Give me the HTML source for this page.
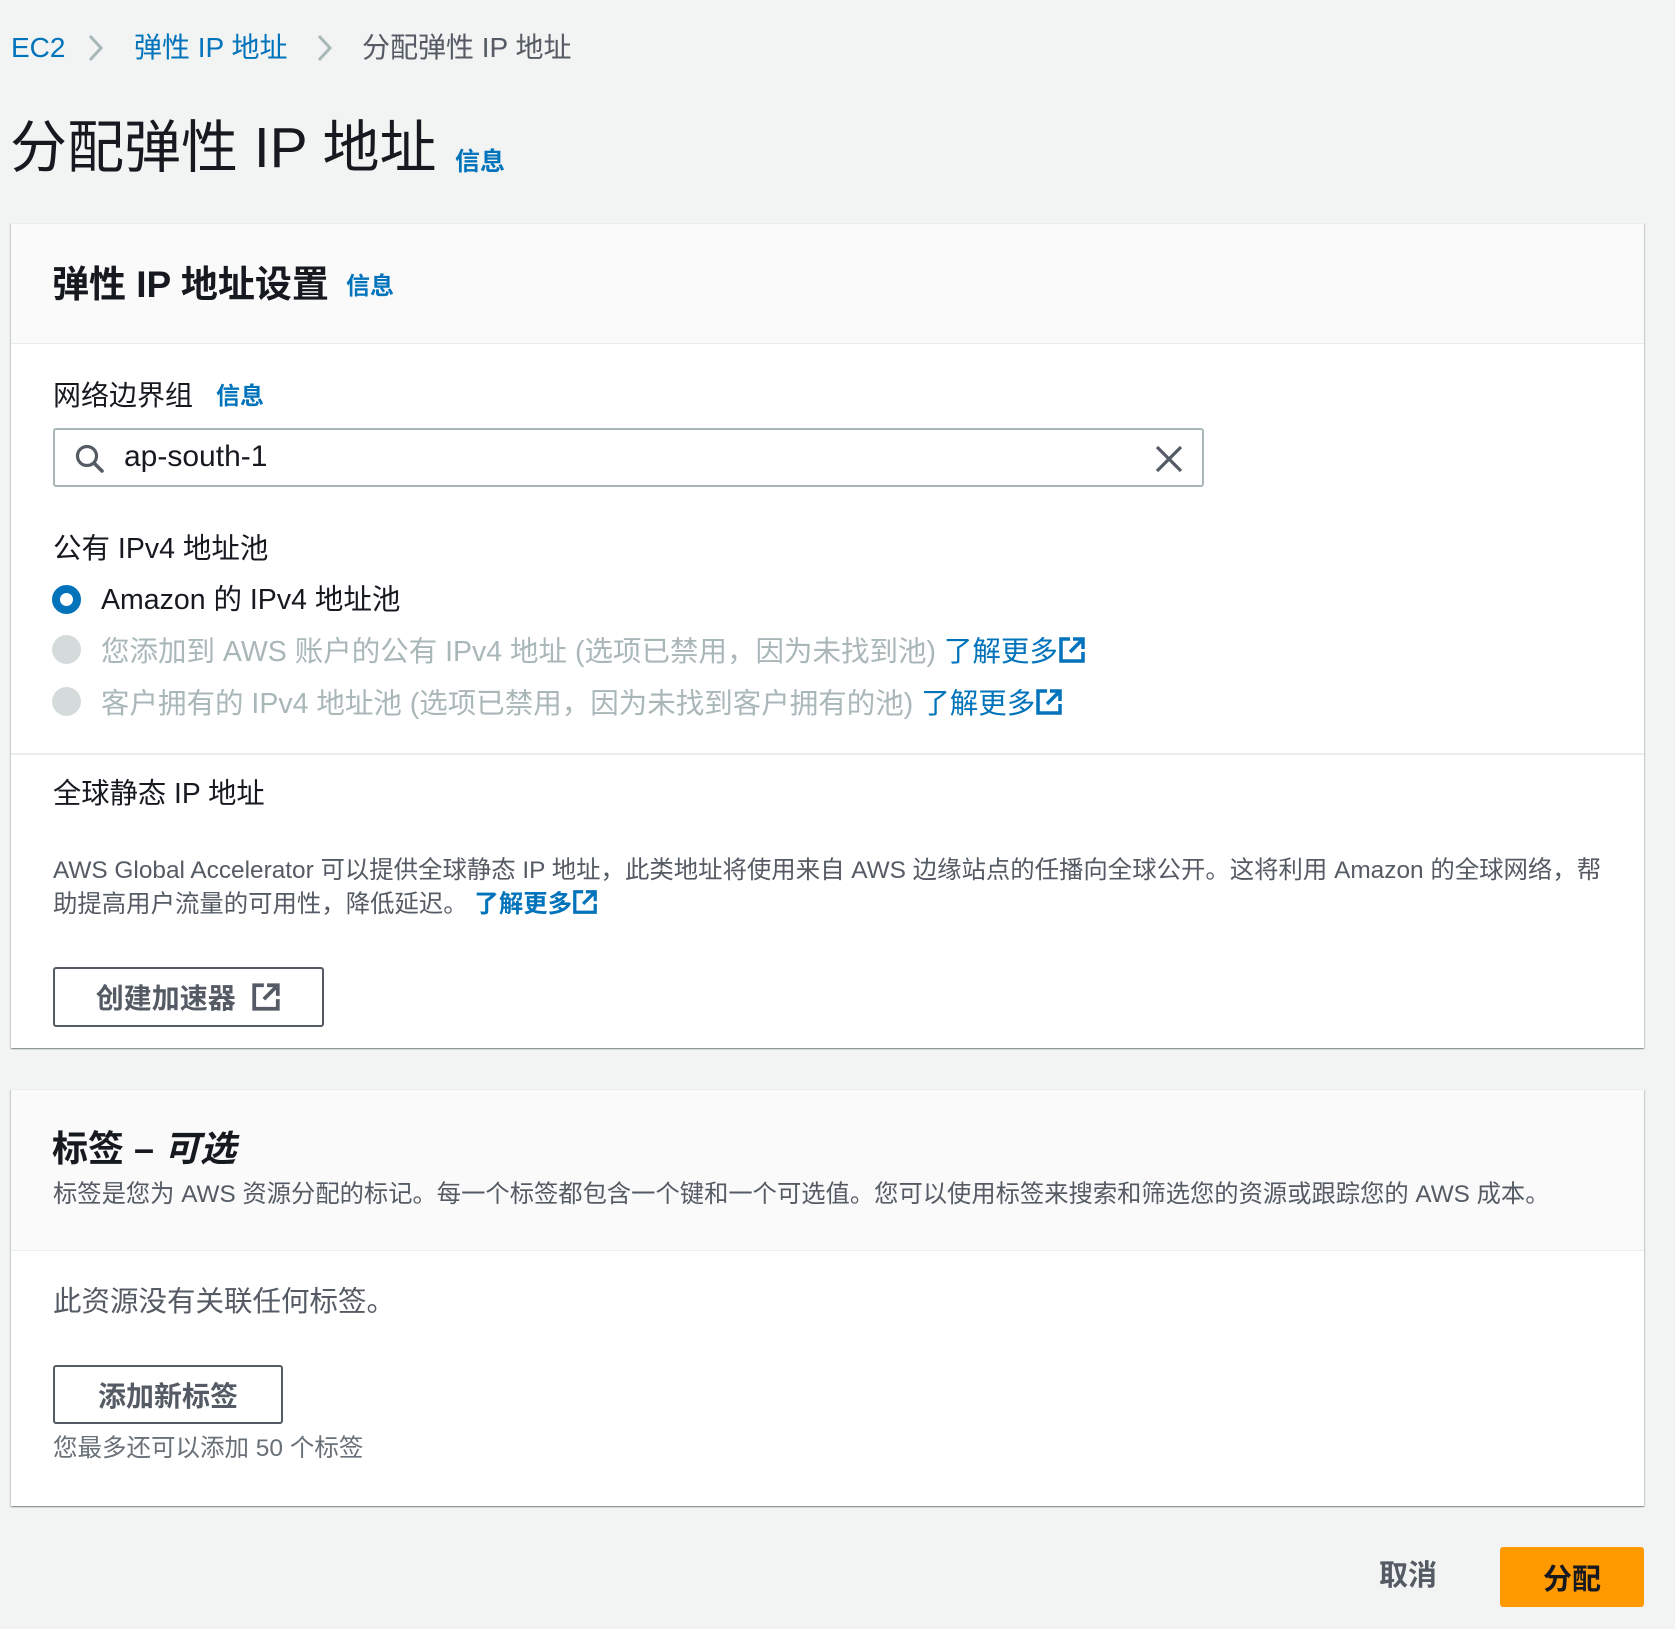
<!DOCTYPE html>
<html><head><meta charset="utf-8"><style>
*{margin:0;padding:0;box-sizing:border-box}
body{width:1675px;height:1629px;background:#f2f3f3;font-family:"Liberation Sans","Noto Sans CJK SC",sans-serif;color:#16191f;position:relative;overflow:hidden}
.a{position:absolute;white-space:nowrap;line-height:1}
.blue{color:#0073bb}
.panel{position:absolute;left:11px;width:1633px;background:#fff;box-shadow:0 1px 1px 0 rgba(0,28,36,.3),1px 1px 1px 0 rgba(0,28,36,.15),-1px 1px 1px 0 rgba(0,28,36,.15);border-top:1px solid #eaeded}
.hdr{position:absolute;left:0;top:0;width:100%;background:#fafafa;border-bottom:1px solid #eaeded}
.info{font-weight:bold;color:#0073bb;font-size:24px}
.btn{position:absolute;border:2px solid #545b64;border-radius:3px;background:#fff;color:#545b64;font-weight:bold;font-size:28px;display:flex;align-items:center;justify-content:center}
.radio{position:absolute;width:29px;height:29px;border-radius:50%}
</style></head><body>

<div class="a" style="left:11px;top:34px;font-size:28px"><span class="blue">EC2</span></div>
<svg class="a" style="left:86px;top:32px" width="20" height="32" viewBox="0 0 20 32"><path d="M4 4 L15 16 L4 28" fill="none" stroke="#aab7b8" stroke-width="3"/></svg>
<div class="a blue" style="left:134px;top:34px;font-size:28px">弹性 IP 地址</div>
<svg class="a" style="left:315px;top:32px" width="20" height="32" viewBox="0 0 20 32"><path d="M4 4 L15 16 L4 28" fill="none" stroke="#aab7b8" stroke-width="3"/></svg>
<div class="a" style="left:362px;top:34px;font-size:28px;color:#545b64">分配弹性 IP 地址</div>

<div class="a" style="left:10px;top:120px;font-size:57px;color:#16191f">分配弹性 IP 地址</div>
<div class="a info" style="left:455px;top:150px;font-size:25px">信息</div>

<div class="panel" style="top:223px;height:825px">
  <div class="hdr" style="height:120px"></div>
  <div class="a" style="left:41px;top:42px;font-size:37px;font-weight:bold">弹性 IP 地址设置</div>
  <div class="a info" style="left:335px;top:51px">信息</div>

  <div class="a" style="left:42px;top:158px;font-size:28px">网络边界组</div>
  <div class="a info" style="left:205px;top:161px">信息</div>

  <div style="position:absolute;left:42px;top:204px;width:1151px;height:59px;border:2px solid #aab7b8;border-radius:3px;background:#fff"></div>
  <svg class="a" style="left:63px;top:219px" width="32" height="32" viewBox="0 0 32 32"><circle cx="13" cy="13" r="9.5" fill="none" stroke="#545b64" stroke-width="3.2"/><path d="M20 20 L28 28" stroke="#545b64" stroke-width="3.6" stroke-linecap="round"/></svg>
  <div class="a" style="left:113px;top:218px;font-size:30px">ap-south-1</div>
  <svg class="a" style="left:1143px;top:220px" width="30" height="30" viewBox="0 0 30 30"><path d="M3 3 L27 27 M27 3 L3 27" stroke="#545b64" stroke-width="3.2"/></svg>

  <div class="a" style="left:42px;top:311px;font-size:28.5px">公有 IPv4 地址池</div>
  <div class="radio" style="left:41px;top:361px;border:8px solid #0073bb;background:#fff"></div>
  <div class="a" style="left:90px;top:362px;font-size:28.5px">Amazon 的 IPv4 地址池</div>
  <div class="radio" style="left:41px;top:411px;background:#d5dbdb"></div>
  <div class="a" style="left:90px;top:412px;font-size:28.5px;color:#aab7b8">您添加到 AWS 账户的公有 IPv4 地址 (选项已禁用，因为未找到池) <span class="blue">了解更多<svg width="28" height="28" viewBox="0 0 28 28" style="vertical-align:-3px"><path d="M12 3H3V25H25V16" fill="none" stroke="#0073bb" stroke-width="3.5"/><path d="M15 3H25V13M25 3L12 16" fill="none" stroke="#0073bb" stroke-width="3.5"/></svg></span></div>
  <div class="radio" style="left:41px;top:463px;background:#d5dbdb"></div>
  <div class="a" style="left:90px;top:464px;font-size:28.5px;color:#aab7b8">客户拥有的 IPv4 地址池 (选项已禁用，因为未找到客户拥有的池) <span class="blue">了解更多<svg width="28" height="28" viewBox="0 0 28 28" style="vertical-align:-3px"><path d="M12 3H3V25H25V16" fill="none" stroke="#0073bb" stroke-width="3.5"/><path d="M15 3H25V13M25 3L12 16" fill="none" stroke="#0073bb" stroke-width="3.5"/></svg></span></div>

  <div style="position:absolute;left:0;top:529px;width:100%;height:2px;background:#eaeded"></div>
  <div class="a" style="left:42px;top:555px;font-size:28.3px">全球静态 IP 地址</div>
  <div class="a" style="left:42px;top:630px;font-size:24.4px;color:#545b64;line-height:34px">AWS Global Accelerator 可以提供全球静态 IP 地址，此类地址将使用来自 AWS 边缘站点的任播向全球公开。这将利用 Amazon 的全球网络，帮<br>助提高用户流量的可用性，降低延迟。 <b class="blue">了解更多<svg width="26" height="26" viewBox="0 0 28 28" style="vertical-align:-3px"><path d="M12 3H3V25H25V16" fill="none" stroke="#0073bb" stroke-width="3.5"/><path d="M15 3H25V13M25 3L12 16" fill="none" stroke="#0073bb" stroke-width="3.5"/></svg></b></div>

  <div class="btn" style="left:42px;top:743px;width:271px;height:60px">创建加速器&nbsp;&nbsp;<svg width="30" height="30" viewBox="0 0 28 28"><path d="M12 3H3V25H25V16" fill="none" stroke="#545b64" stroke-width="3.5"/><path d="M15 3H25V13M25 3L12 16" fill="none" stroke="#545b64" stroke-width="3.5"/></svg></div>
</div>

<div class="panel" style="top:1089px;height:417px">
  <div class="hdr" style="height:161px"></div>
  <div class="a" style="left:41px;top:41px;font-size:36px;font-weight:bold">标签 – <i>可选</i></div>
  <div class="a" style="left:42px;top:93px;font-size:24.3px;color:#545b64">标签是您为 AWS 资源分配的标记。每一个标签都包含一个键和一个可选值。您可以使用标签来搜索和筛选您的资源或跟踪您的 AWS 成本。</div>
  <div class="a" style="left:42px;top:198px;font-size:28.5px;color:#545b64">此资源没有关联任何标签。</div>
  <div class="btn" style="left:42px;top:275px;width:230px;height:59px">添加新标签</div>
  <div class="a" style="left:42px;top:347px;font-size:24.5px;color:#687078">您最多还可以添加 50 个标签</div>
</div>

<div class="a" style="left:1379px;top:1562px;font-size:29px;font-weight:bold;color:#545b64">取消</div>
<div style="position:absolute;left:1500px;top:1547px;width:144px;height:60px;background:#ff9900;border-radius:3px;display:flex;align-items:center;justify-content:center;font-size:29px;font-weight:bold;color:#16191f">分配</div>

</body></html>
